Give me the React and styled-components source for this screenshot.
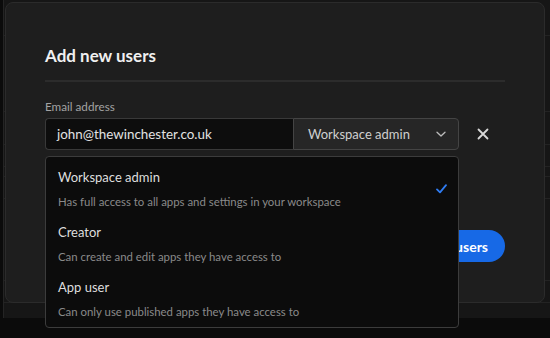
import React from "react";
import styled, { createGlobalStyle } from "styled-components";

const GlobalStyle = createGlobalStyle`
  html, body {
    margin: 0;
    padding: 0;
    background: #0b0b0b;
  }
  body {
    font-family: "Lato", "Noto Sans", sans-serif;
    -webkit-font-smoothing: antialiased;
  }
  * {
    box-sizing: border-box;
  }
`;

const Page = styled.div`
  position: relative;
  width: 550px;
  height: 338px;
  overflow: hidden;
  background: #0b0b0b;
`;

const Backdrop = styled.div`
  height: 318px;
  display: flex;
  flex-direction: column;
  background: #161616;
  border-left: 1px solid #242424;
  margin-left: 3px;
`;

const BackRow = styled.div`
  height: ${(p) => p.h}px;
  border-bottom: 1px solid #232323;
`;

const Modal = styled.div`
  position: absolute;
  left: 5px;
  top: 2px;
  width: 540px;
  height: 301px;
  background: #1e1e1e;
  border: 1px solid #2b2b2b;
  border-radius: 8px;
  padding: 42px 39px 40px;
  display: flex;
  flex-direction: column;
`;

const Title = styled.h2`
  margin: 0;
  font-size: 17px;
  line-height: 22px;
  font-weight: 700;
  color: #f0f0f0;
  padding-bottom: 13px;
  border-bottom: 2px solid #2c2c2c;
`;

const Label = styled.div`
  margin-top: 16px;
  font-size: 11.7px;
  line-height: 16px;
  color: #a3a3a3;
`;

const FieldRow = styled.div`
  position: relative;
  margin-top: 4px;
  display: flex;
  align-items: center;
`;

const EmailInput = styled.div`
  width: 248px;
  height: 32px;
  display: flex;
  align-items: center;
  padding: 0 11px;
  background: #0d0d0d;
  border: 1px solid #393939;
  border-right: none;
  border-radius: 4px 0 0 4px;
  font-size: 13.4px;
  color: #e2e2e2;
`;

const SelectBox = styled.div`
  width: 166px;
  height: 32px;
  display: flex;
  align-items: center;
  justify-content: space-between;
  padding: 0 11px 0 14px;
  background: #262626;
  border: 1px solid #444;
  border-radius: 0 4px 4px 0;
  font-size: 13px;
  color: #cfcfcf;
`;

const CloseButton = styled.div`
  margin-left: 17px;
  width: 14px;
  height: 14px;
  display: flex;
  align-items: center;
  justify-content: center;
`;

const Menu = styled.div`
  position: absolute;
  left: 0;
  top: 38px;
  width: 414px;
  padding: 4px 0 1px;
  background: #0c0c0c;
  border: 1px solid #3c3c3c;
  border-radius: 4px;
  z-index: 2;
`;

const Option = styled.div`
  display: flex;
  align-items: center;
  justify-content: space-between;
  padding: 6px 11px 6px 12px;
`;

const OptionText = styled.div`
  display: flex;
  flex-direction: column;
  gap: 7px;
`;

const OptionTitle = styled.div`
  font-size: 13px;
  line-height: 20px;
  color: #dedede;
`;

const OptionDesc = styled.div`
  font-size: 11.4px;
  line-height: 16px;
  color: #8a8a8a;
`;

const Footer = styled.div`
  margin-top: auto;
  display: flex;
  justify-content: flex-end;
`;

const PrimaryButton = styled.div`
  height: 32px;
  padding: 0 17px;
  display: flex;
  align-items: center;
  background: #1769e6;
  border-radius: 16px;
  font-size: 14px;
  font-weight: 700;
  color: #fff;
`;

const Chevron = () => (
  <svg width="12" height="12" viewBox="0 0 12 12" fill="none">
    <path d="M2 4.2l4 3.8 4-3.8" stroke="#bdbdbd" strokeWidth="1.3" strokeLinecap="round" strokeLinejoin="round" />
  </svg>
);

const Cross = () => (
  <svg width="12" height="12" viewBox="0 0 12 12" fill="none">
    <path d="M1.5 1.5l9 9M10.5 1.5l-9 9" stroke="#d8d8d8" strokeWidth="1.8" strokeLinecap="round" />
  </svg>
);

const Check = () => (
  <svg width="11" height="10" viewBox="0 0 11 10" fill="none">
    <path d="M1 5.4l3 3L10 1.2" stroke="#2f7cf2" strokeWidth="1.8" strokeLinecap="round" strokeLinejoin="round" />
  </svg>
);

const roles = [
  { name: "Workspace admin", desc: "Has full access to all apps and settings in your workspace", selected: true },
  { name: "Creator", desc: "Can create and edit apps they have access to" },
  { name: "App user", desc: "Can only use published apps they have access to" },
];

const backRows = [36, 76, 33, 22, 10, 22, 82, 22];

export default function App() {
  return (
    <Page>
      <GlobalStyle />
      <Backdrop>
        {backRows.map((h, i) => (
          <BackRow key={i} h={h} />
        ))}
      </Backdrop>
      <Modal>
        <Title>Add new users</Title>
        <Label>Email address</Label>
        <FieldRow>
          <EmailInput>john@thewinchester.co.uk</EmailInput>
          <SelectBox>
            Workspace admin
            <Chevron />
          </SelectBox>
          <CloseButton>
            <Cross />
          </CloseButton>
          <Menu>
            {roles.map((r) => (
              <Option key={r.name}>
                <OptionText>
                  <OptionTitle>{r.name}</OptionTitle>
                  <OptionDesc>{r.desc}</OptionDesc>
                </OptionText>
                {r.selected && <Check />}
              </Option>
            ))}
          </Menu>
        </FieldRow>
        <Footer>
          <PrimaryButton>Add users</PrimaryButton>
        </Footer>
      </Modal>
    </Page>
  );
}
